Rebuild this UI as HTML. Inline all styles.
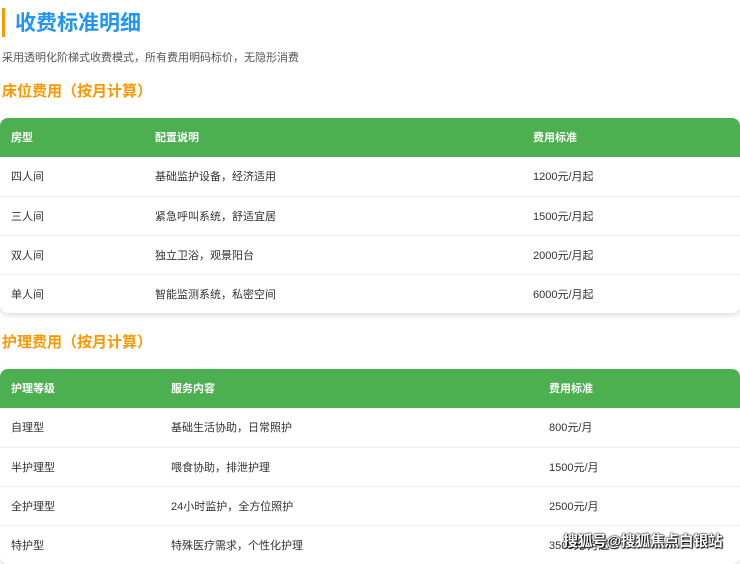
<!DOCTYPE html>
<html><head><meta charset="utf-8"><style>
body{margin:0;width:740px;height:555px;overflow:hidden;background:#fff;font-family:"Liberation Sans","Noto Sans CJK SC",sans-serif;position:relative}
.bar{position:absolute;left:2px;top:8px;width:3px;height:29px;background:#FF9800}
h1{position:absolute;left:15px;top:9px;margin:0;font-size:21px;line-height:29px;color:#2196F3;font-weight:bold}
.sub{position:absolute;left:2px;top:50px;font-size:11px;color:#555;line-height:16px}
h2{position:absolute;left:2px;margin:0;font-size:15px;color:#FF9800;font-weight:bold;line-height:20px}
.t{position:absolute;left:0;width:740px;border-radius:8px;box-shadow:0 2px 6px rgba(0,0,0,.15);overflow:hidden;background:#fff}
.r{height:39px;position:relative;border-top:1px solid #eee;box-sizing:border-box;font-size:11px;color:#333}
.r span{position:absolute;top:1px;line-height:38px}
.h{background:#4CAF50;color:#fff;font-weight:bold;border-top:none;height:39px}
.wm{position:absolute;left:563px;top:530px;font-size:15px;letter-spacing:-0.5px;color:#fff;font-weight:bold;text-shadow:0 0 2px #000,0 0 1px #000,1px 1px 1px #000}
</style></head><body>
<div class="bar"></div><h1>收费标准明细</h1>
<div class="sub">采用透明化阶梯式收费模式，所有费用明码标价，无隐形消费</div>
<h2 style="top:82px">床位费用（按月计算）</h2>
<div class="t" style="top:118px">
<div class="r h"><span style="left:11px">房型</span><span style="left:155px">配置说明</span><span style="left:533px">费用标准</span></div>
<div class="r" style="border-top:none"><span style="left:11px">四人间</span><span style="left:155px">基础监护设备，经济适用</span><span style="left:533px">1200元/月起</span></div>
<div class="r"><span style="left:11px">三人间</span><span style="left:155px">紧急呼叫系统，舒适宜居</span><span style="left:533px">1500元/月起</span></div>
<div class="r"><span style="left:11px">双人间</span><span style="left:155px">独立卫浴，观景阳台</span><span style="left:533px">2000元/月起</span></div>
<div class="r"><span style="left:11px">单人间</span><span style="left:155px">智能监测系统，私密空间</span><span style="left:533px">6000元/月起</span></div>
</div>
<h2 style="top:333px">护理费用（按月计算）</h2>
<div class="t" style="top:369px">
<div class="r h"><span style="left:11px">护理等级</span><span style="left:171px">服务内容</span><span style="left:549px">费用标准</span></div>
<div class="r" style="border-top:none"><span style="left:11px">自理型</span><span style="left:171px">基础生活协助，日常照护</span><span style="left:549px">800元/月</span></div>
<div class="r"><span style="left:11px">半护理型</span><span style="left:171px">喂食协助，排泄护理</span><span style="left:549px">1500元/月</span></div>
<div class="r"><span style="left:11px">全护理型</span><span style="left:171px">24小时监护，全方位照护</span><span style="left:549px">2500元/月</span></div>
<div class="r"><span style="left:11px">特护型</span><span style="left:171px">特殊医疗需求，个性化护理</span><span style="left:549px">3500元/月起</span></div>
</div>
<div class="wm">搜狐号@搜狐焦点白银站</div>
</body></html>
